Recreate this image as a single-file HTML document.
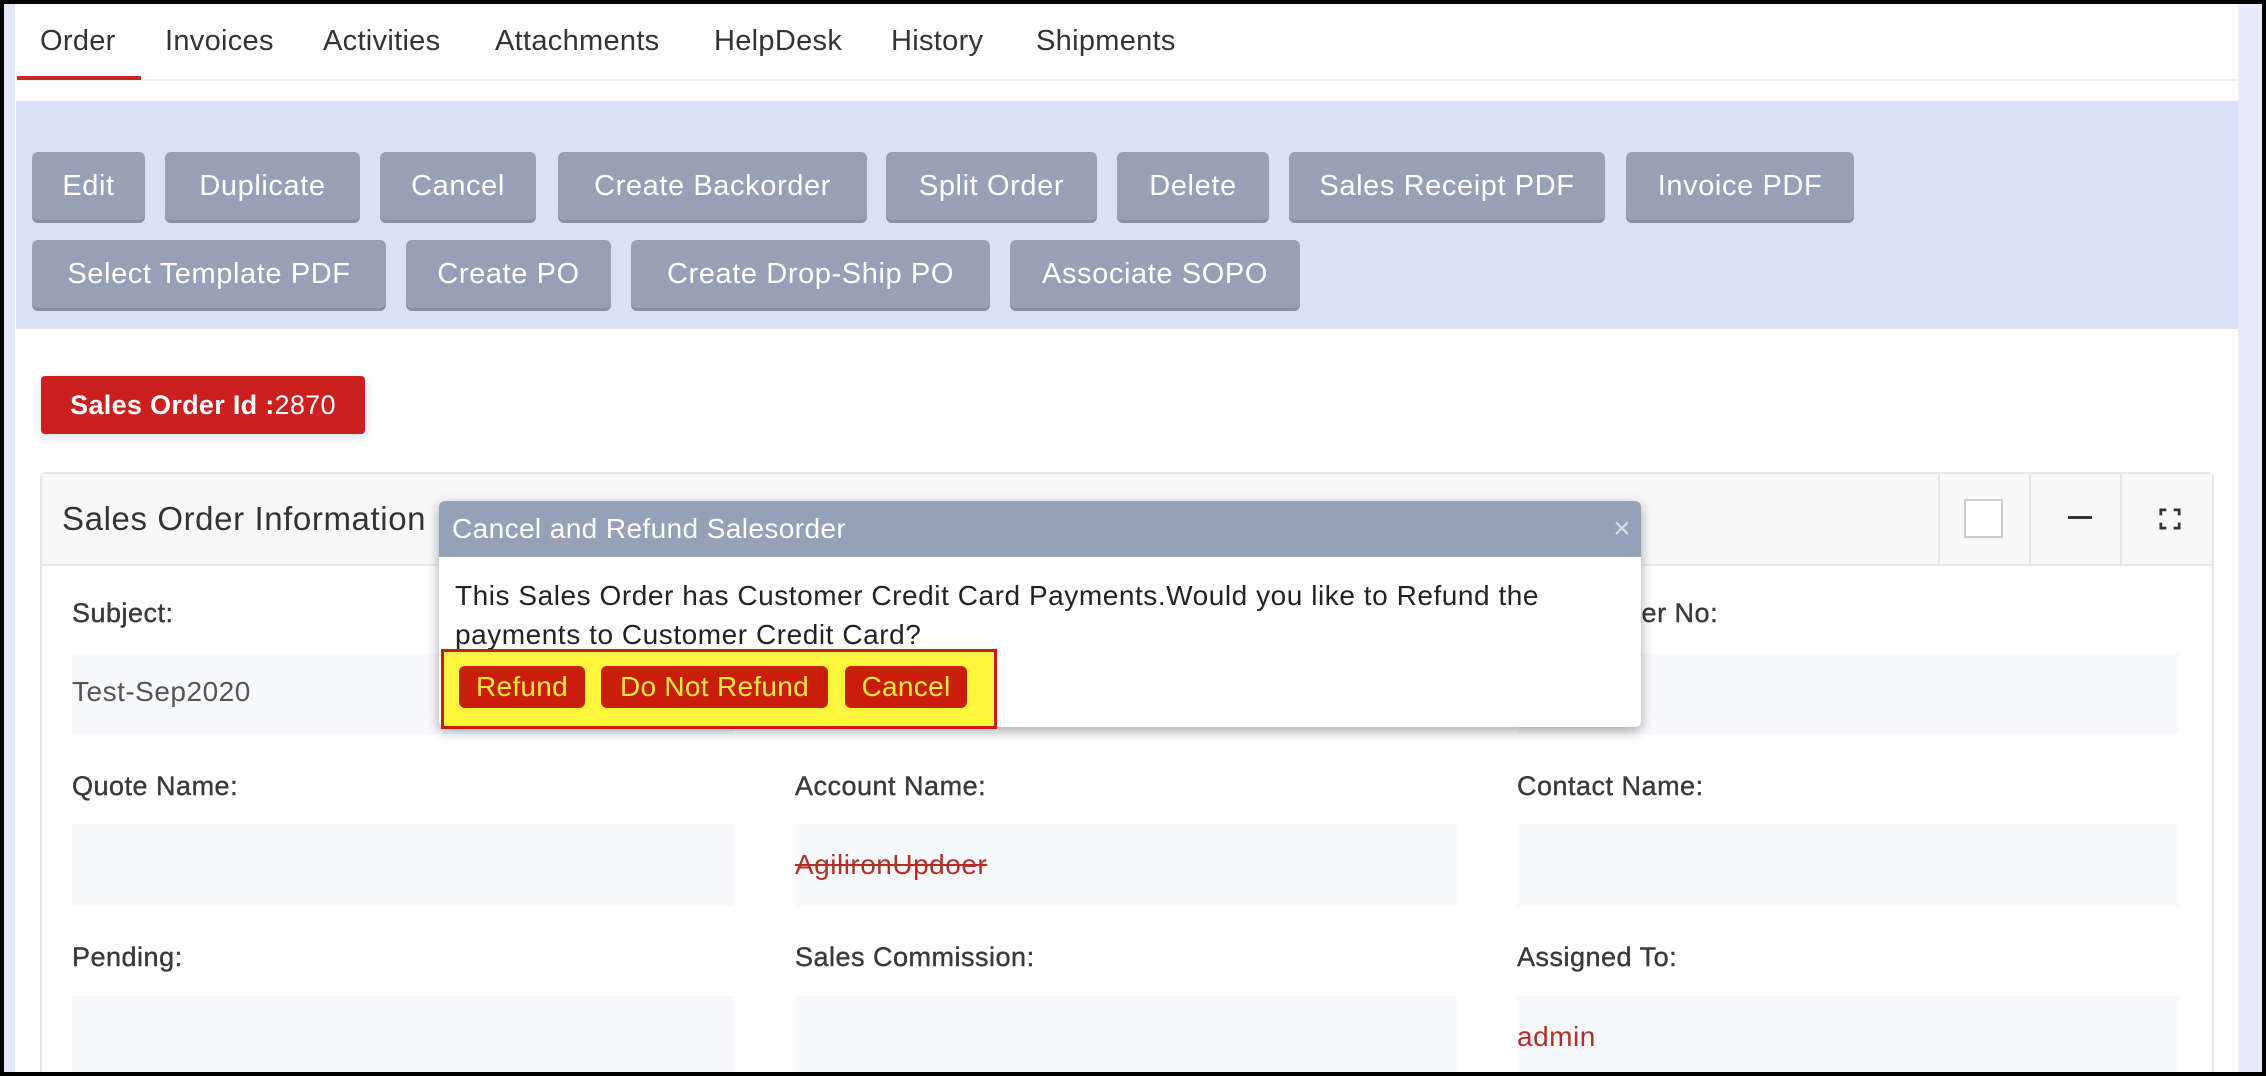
<!DOCTYPE html>
<html><head><meta charset="utf-8"><style>
*{margin:0;padding:0;box-sizing:border-box}
body{width:2266px;height:1076px;background:#000;position:relative;overflow:hidden;font-family:"Liberation Sans",sans-serif}
.page{position:absolute;left:4px;top:4px;width:2258px;height:1068px;background:#fff;overflow:hidden}
.a{position:absolute}
.tab{position:absolute;top:18px;font-size:29px;color:#333;line-height:38px;letter-spacing:0.3px}
.btn{position:absolute;height:68px;background:#98a0b8;color:#fff;font-size:29px;letter-spacing:0.6px;border-radius:6px;display:flex;align-items:center;justify-content:center;box-shadow:0 3px 0 #8890a8}
.lbl{position:absolute;font-size:27px;color:#3a3a3a;line-height:30px;letter-spacing:0.5px;-webkit-text-stroke:0.4px #3a3a3a}
.box{position:absolute;background:#f8f9fd;width:662px}
.val{position:absolute;font-size:28px;line-height:30px;letter-spacing:0.5px}
.db{position:absolute;top:662px;height:42px;background:#c81e0a;color:#ffeb3b;font-size:28px;letter-spacing:0.3px;border-radius:6px;display:flex;align-items:center;justify-content:center}
</style></head><body><div class="page">
<div class="a" style="left:0;top:0;width:11px;height:1068px;background:#e3e7f9"></div>
<div class="a" style="left:2234px;top:0;width:24px;height:1068px;background:#e8ebfa"></div>
<div class="tab" style="left:36px">Order</div>
<div class="tab" style="left:161px">Invoices</div>
<div class="tab" style="left:319px">Activities</div>
<div class="tab" style="left:491px">Attachments</div>
<div class="tab" style="left:710px">HelpDesk</div>
<div class="tab" style="left:887px">History</div>
<div class="tab" style="left:1032px">Shipments</div>
<div class="a" style="left:12px;top:75px;width:2222px;height:2px;background:#eef0f4"></div>
<div class="a" style="left:13px;top:72px;width:124px;height:4px;background:#c62828"></div>
<div class="a" style="left:12px;top:97px;width:2222px;height:228px;background:#dae0f8"></div>
<div class="btn" style="left:28px;top:148px;width:113px">Edit</div>
<div class="btn" style="left:161px;top:148px;width:195px">Duplicate</div>
<div class="btn" style="left:376px;top:148px;width:156px">Cancel</div>
<div class="btn" style="left:554px;top:148px;width:309px">Create Backorder</div>
<div class="btn" style="left:882px;top:148px;width:211px">Split Order</div>
<div class="btn" style="left:1113px;top:148px;width:152px">Delete</div>
<div class="btn" style="left:1285px;top:148px;width:316px">Sales Receipt PDF</div>
<div class="btn" style="left:1622px;top:148px;width:228px">Invoice PDF</div>
<div class="btn" style="left:28px;top:236px;width:354px">Select Template PDF</div>
<div class="btn" style="left:402px;top:236px;width:205px">Create PO</div>
<div class="btn" style="left:627px;top:236px;width:359px">Create Drop-Ship PO</div>
<div class="btn" style="left:1006px;top:236px;width:290px">Associate SOPO</div>
<div class="a" style="left:37px;top:372px;width:324px;height:58px;background:#cc1f1f;border-radius:4px;color:#fff;font-size:27px;letter-spacing:0.3px;display:flex;align-items:center;justify-content:center;box-shadow:0 3px 10px rgba(120,120,200,.25)"><b>Sales Order Id :</b>2870</div>
<div class="a" style="left:36px;top:468px;width:2174px;height:620px;border:2px solid #e4e6ea;border-radius:6px;background:#fff"></div>
<div class="a" style="left:38px;top:470px;width:2170px;height:92px;background:#f8f8f9;border-bottom:2px solid #e4e6ea"></div>
<div class="a" style="left:58px;top:496px;font-size:33px;letter-spacing:0.6px;color:#333">Sales Order Information</div>
<div class="a" style="left:1934px;top:470px;width:2px;height:92px;background:#e4e6ea"></div>
<div class="a" style="left:2025px;top:470px;width:2px;height:92px;background:#e4e6ea"></div>
<div class="a" style="left:2116px;top:470px;width:2px;height:92px;background:#e4e6ea"></div>
<div class="a" style="left:1960px;top:495px;width:39px;height:39px;border:2px solid #ccc;background:#fff"></div>
<div class="a" style="left:2064px;top:512px;width:24px;height:3px;background:#333"></div>
<svg class="a" style="left:2155px;top:504px" width="22" height="22" viewBox="0 0 24 24"><path d="M2 8V2h6M16 2h6v6M22 16v6h-6M8 22H2v-6" stroke="#333" stroke-width="3" fill="none"/></svg>
<div class="lbl" style="left:68px;top:594px">Subject:</div>
<div class="lbl" style="left:791px;top:767px">Account Name:</div>
<div class="lbl" style="left:68px;top:767px">Quote Name:</div>
<div class="lbl" style="left:1513px;top:767px">Contact Name:</div>
<div class="lbl" style="left:1513px;top:594px">Sales Order No:</div>
<div class="lbl" style="left:68px;top:938px">Pending:</div>
<div class="lbl" style="left:791px;top:938px">Sales Commission:</div>
<div class="lbl" style="left:1513px;top:938px">Assigned To:</div>
<div class="box" style="left:68px;top:649px;height:81px"></div>
<div class="box" style="left:1513px;top:649px;height:81px"></div>
<div class="box" style="left:68px;top:820px;height:82px"></div>
<div class="box" style="left:791px;top:820px;height:82px"></div>
<div class="box" style="left:1513px;top:820px;height:82px"></div>
<div class="box" style="left:68px;top:992px;height:80px"></div>
<div class="box" style="left:791px;top:992px;height:80px"></div>
<div class="box" style="left:1513px;top:992px;height:80px"></div>
<div class="val" style="left:68px;top:673px;color:#555">Test-Sep2020</div>
<div class="val" style="left:791px;top:846px;color:#b03028;text-decoration:line-through">AgilironUpdoer</div>
<div class="val" style="left:1513px;top:1018px;color:#b03028">admin</div>
<div class="a" style="left:435px;top:497px;width:1202px;height:226px;background:#fff;border-radius:6px;box-shadow:0 4px 12px rgba(0,0,0,.35);overflow:hidden">
<div style="height:56px;background:#97a0b9;color:#fff;font-size:28px;letter-spacing:0.4px;line-height:56px;padding-left:13px;position:relative">Cancel and Refund Salesorder<span style="position:absolute;right:10px;top:0;color:#d8dce6;font-size:30px">×</span></div>
<div style="padding:19px 0 0 16px;font-size:28px;letter-spacing:0.55px;line-height:39px;color:#222">This Sales Order has Customer Credit Card Payments.Would you like to Refund the<br>payments to Customer Credit Card?</div>
</div>
<div class="a" style="left:437px;top:645px;width:556px;height:80px;background:#fff53a;border:3px solid #c81e0a"></div>
<div class="db" style="left:455px;width:126px">Refund</div>
<div class="db" style="left:597px;width:227px">Do Not Refund</div>
<div class="db" style="left:841px;width:122px">Cancel</div>
</div></body></html>
